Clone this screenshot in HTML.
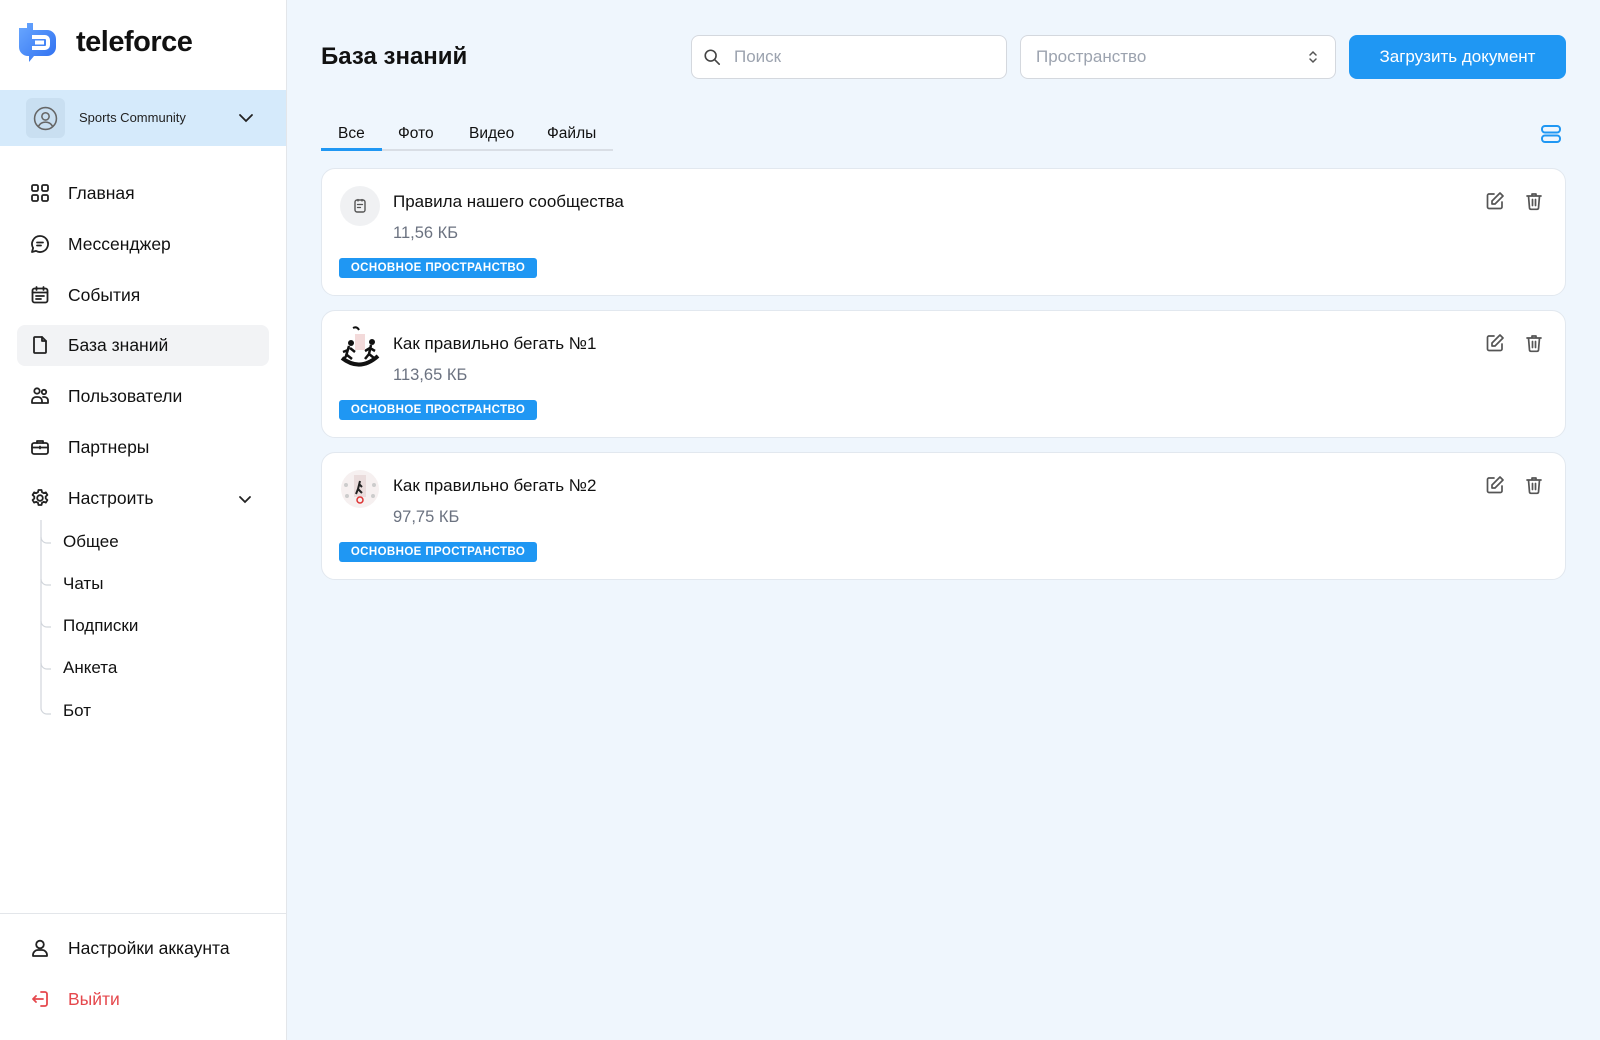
<!DOCTYPE html>
<html><head><meta charset="utf-8"><style>
*{margin:0;padding:0;box-sizing:border-box}
body{width:1600px;height:1040px;overflow:hidden;background:#eff6fd;font-family:"Liberation Sans",sans-serif;color:#111827;position:relative}
.abs{position:absolute}
.sb{position:absolute;left:0;top:0;width:287px;height:1040px;background:#fff;border-right:1px solid #e3e6ea}
.nav{position:absolute;left:0;width:287px;height:40px;display:flex;align-items:center;font-size:17.5px;font-weight:500;color:#111}
.nav svg{position:absolute;left:30px;width:20px;height:20px;fill:none;stroke:#222;stroke-width:1.8;stroke-linecap:round;stroke-linejoin:round}
.nav span{position:absolute;left:68px}
.sub{position:absolute;left:63px;font-size:17px;color:#111;font-weight:500}
.card{position:absolute;left:321px;width:1245px;height:128px;background:#fff;border:1.5px solid #e2e8ef;border-radius:14px}
.card .t{position:absolute;left:71px;top:23px;font-size:17px;font-weight:500;color:#111}
.card .s{position:absolute;left:71px;top:55px;font-size:16.5px;color:#6b7280}
.card .b{position:absolute;left:17px;top:89px;width:198px;height:20px;background:#1f97f3;border-radius:3px;color:#fff;font-size:11.5px;font-weight:700;letter-spacing:.4px;text-align:center;line-height:20px}
.card .ic{position:absolute;left:18px;top:17px;width:40px;height:40px;border-radius:50%;background:#f0f1f3}
.card .ed{position:absolute;left:1163px;top:22px}
.card .tr{position:absolute;left:1202px;top:22px}
.ico{fill:none;stroke:#555;stroke-width:1.7;stroke-linecap:round;stroke-linejoin:round}
</style></head><body>
<div class="sb">
 <svg class="abs" style="left:17px;top:22px" width="42" height="42" viewBox="0 0 42 42"><defs><linearGradient id="g" x1="0" y1="0" x2="1" y2="1"><stop offset="0" stop-color="#6aa8ff"/><stop offset="1" stop-color="#2d6ef0"/></linearGradient></defs><path d="M2 6h8V1h6v7h14a9 9 0 0 1 9 9v8a9 9 0 0 1-9 9H17l-5 6v-6h-1a9 9 0 0 1-9-9z" fill="url(#g)"/><path d="M15 15h13a3 3 0 0 1 3 3v5a3 3 0 0 1-3 3H15M18 20.5h9" stroke="#fff" stroke-width="4" fill="none"/></svg>
 <div class="abs" style="left:76px;top:26px;font-size:29px;font-weight:700;letter-spacing:-0.5px;color:#111">teleforce</div>
 <div class="abs" style="left:0;top:90px;width:286px;height:56px;background:#d5eafb"></div>
 <div class="abs" style="left:26px;top:98px;width:39px;height:40px;border-radius:6px;background:#c9dff1"></div>
 <svg class="abs" style="left:33px;top:106px" width="25" height="25" viewBox="0 0 24 24"><g class="ico" style="stroke:#666;stroke-width:1.5"><circle cx="12" cy="12" r="10.5"/><circle cx="12" cy="10" r="3.5"/><path d="M5.5 19c1.5-2.5 4-3.5 6.5-3.5s5 1 6.5 3.5"/></g></svg>
 <div class="abs" style="left:79px;top:110px;font-size:13px;font-weight:500;color:#222">Sports Community</div>
 <svg class="abs" style="left:238px;top:110px" width="16" height="16" viewBox="0 0 16 16"><path d="M2 5l6 6 6-6" fill="none" stroke="#222" stroke-width="1.8" stroke-linecap="round"/></svg>

 <div class="abs" style="left:17px;top:325px;width:252px;height:41px;background:#f2f3f5;border-radius:8px"></div>
 <div class="nav" style="top:173px"><svg viewBox="0 0 20 20"><rect x="2" y="2" width="6" height="6" rx="1.5"/><rect x="12" y="2" width="6" height="6" rx="1.5"/><rect x="2" y="12" width="6" height="6" rx="1.5"/><rect x="12" y="12" width="6" height="6" rx="1.5"/></svg><span>Главная</span></div>
 <div class="nav" style="top:224px"><svg viewBox="0 0 20 20"><path d="M10 2a8 8 0 1 1-4 14.9L2 18l1.1-4A8 8 0 0 1 10 2z"/><path d="M7 8.5h6M7 11.5h4"/></svg><span>Мессенджер</span></div>
 <div class="nav" style="top:275px"><svg viewBox="0 0 20 20"><rect x="2.5" y="3.5" width="15" height="14" rx="2"/><path d="M2.5 7.5h15M6.5 2v3M13.5 2v3M6 11h8M6 14h5"/></svg><span>События</span></div>
 <div class="nav" style="top:325px"><svg viewBox="0 0 20 20"><path d="M4 3a1 1 0 0 1 1-1h7l4 4v11a1 1 0 0 1-1 1H5a1 1 0 0 1-1-1z"/><path d="M12 2v4h4"/></svg><span>База знаний</span></div>
 <div class="nav" style="top:376px"><svg viewBox="0 0 20 20"><circle cx="7" cy="5" r="2.7"/><circle cx="14" cy="6" r="2.2"/><path d="M2 17v-2a4 4 0 0 1 4-4h2a4 4 0 0 1 4 4v2zM13 11h1.5a3.5 3.5 0 0 1 3.5 3.5V17h-5"/></svg><span>Пользователи</span></div>
 <div class="nav" style="top:427px"><svg viewBox="0 0 20 20"><rect x="2" y="6" width="16" height="11" rx="2"/><path d="M7 6V4h6v2M2 10.5h16M10 9.5v2"/></svg><span>Партнеры</span></div>
 <div class="nav" style="top:478px"><svg viewBox="0 0 20 20"><circle cx="10" cy="10" r="2.8"/><path d="M8.5 2h3l.5 2.2 1.8 1 2.1-.8 1.5 2.6-1.7 1.5v2l1.7 1.5-1.5 2.6-2.1-.8-1.8 1-.5 2.2h-3l-.5-2.2-1.8-1-2.1.8-1.5-2.6 1.7-1.5v-2L2.6 7l1.5-2.6 2.1.8 1.8-1z"/></svg><span>Настроить</span></div>
 <svg class="abs" style="left:237px;top:491px" width="16" height="16" viewBox="0 0 16 16"><path d="M3 6l5 5 5-5" fill="none" stroke="#222" stroke-width="1.8" stroke-linecap="round"/></svg>
 <svg class="abs" style="left:38px;top:520px" width="20" height="200"><path d="M3 0v188a6 6 0 0 0 6 6h4" fill="none" stroke="#d1d5db" stroke-width="1.2"/><path d="M3 17a6 6 0 0 0 6 6h4M3 59a6 6 0 0 0 6 6h4M3 101a6 6 0 0 0 6 6h4M3 143a6 6 0 0 0 6 6h4" fill="none" stroke="#d1d5db" stroke-width="1.2"/></svg>
 <div class="sub" style="top:532px">Общее</div>
 <div class="sub" style="top:574px">Чаты</div>
 <div class="sub" style="top:616px">Подписки</div>
 <div class="sub" style="top:658px">Анкета</div>
 <div class="sub" style="top:701px">Бот</div>
 <div class="abs" style="left:0;top:913px;width:287px;height:1px;background:#e3e6ea"></div>
 <div class="nav" style="top:928px"><svg viewBox="0 0 20 20"><circle cx="10" cy="6.5" r="3.8"/><path d="M3 18v-1a5 5 0 0 1 5-5h4a5 5 0 0 1 5 5v1z"/></svg><span>Настройки аккаунта</span></div>
 <div class="nav" style="top:979px;color:#e5484d"><svg viewBox="0 0 20 20" style="stroke:#e5484d"><path d="M11 3h4a2 2 0 0 1 2 2v10a2 2 0 0 1-2 2h-4M3 10h10M6 7l-3 3 3 3"/></svg><span>Выйти</span></div>
</div>

<div class="abs" style="left:321px;top:43px;font-size:24px;font-weight:600;color:#111">База знаний</div>
<div class="abs" style="left:691px;top:35px;width:316px;height:44px;background:#fff;border:1.5px solid #d4d8de;border-radius:8px"></div>
<svg class="abs" style="left:703px;top:48px" width="18" height="18" viewBox="0 0 20 20"><circle cx="8.5" cy="8.5" r="6" fill="none" stroke="#444" stroke-width="1.8"/><path d="M13 13l5 5" stroke="#444" stroke-width="1.8" stroke-linecap="round"/></svg>
<div class="abs" style="left:734px;top:47px;font-size:17px;color:#9ca3af">Поиск</div>
<div class="abs" style="left:1020px;top:35px;width:316px;height:44px;background:#fff;border:1.5px solid #d4d8de;border-radius:8px"></div>
<div class="abs" style="left:1036px;top:47px;font-size:17px;color:#9ca3af">Пространство</div>
<svg class="abs" style="left:1307px;top:48px" width="12" height="18" viewBox="0 0 12 18"><path d="M3 7l3-3 3 3M3 11l3 3 3-3" fill="none" stroke="#555" stroke-width="1.5" stroke-linecap="round"/></svg>
<div class="abs" style="left:1349px;top:35px;width:217px;height:44px;background:#1f97f3;border-radius:8px;color:#fff;font-size:17px;font-weight:500;text-align:center;line-height:44px">Загрузить документ</div>

<div class="abs" style="left:321px;top:149px;width:292px;height:2px;background:#d9dee5"></div>
<div class="abs" style="left:321px;top:148px;width:61px;height:3px;background:#1f97f3"></div>
<div class="abs" style="left:338px;top:125px;font-size:15.5px;color:#111">Все</div>
<div class="abs" style="left:398px;top:125px;font-size:15.5px;color:#111">Фото</div>
<div class="abs" style="left:469px;top:125px;font-size:15.5px;color:#111">Видео</div>
<div class="abs" style="left:547px;top:125px;font-size:15.5px;color:#111">Файлы</div>
<svg class="abs" style="left:1540px;top:124px" width="22" height="20" viewBox="0 0 22 20"><rect x="2" y="2" width="18" height="6.5" rx="3" fill="none" stroke="#1f97f3" stroke-width="2"/><rect x="2" y="11.5" width="18" height="6.5" rx="3" fill="none" stroke="#1f97f3" stroke-width="2"/></svg>

<div class="card" style="top:168px">
 <div class="ic"></div>
 <svg class="abs" style="left:30px;top:29px" width="16" height="16" viewBox="0 0 16 16"><rect x="3" y="2" width="10" height="12" rx="2" fill="none" stroke="#555" stroke-width="1.4"/><path d="M5.5 6.5h5M5.5 9.5h3M6 1.5v1.5M10 1.5v1.5" stroke="#555" stroke-width="1.3" stroke-linecap="round"/></svg>
 <div class="t">Правила нашего сообщества</div><div class="s">11,56 КБ</div><div class="b">ОСНОВНОЕ ПРОСТРАНСТВО</div>
 <svg class="ed" width="20" height="20" viewBox="0 0 20 20"><g class="ico"><path d="M9 3H4a1.5 1.5 0 0 0-1.5 1.5v11.5A1.5 1.5 0 0 0 4 17.5h11.5A1.5 1.5 0 0 0 17 16v-5"/><path d="M15 2l3 3-8 8H7v-3z"/></g></svg>
 <svg class="tr" width="20" height="20" viewBox="0 0 20 20"><g class="ico"><path d="M3 5h14M8 5V3h4v2M4.5 5l1 12a1.5 1.5 0 0 0 1.5 1.3h6a1.5 1.5 0 0 0 1.5-1.3l1-12M8.5 8.5v6M11.5 8.5v6"/></g></svg>
</div>
<div class="card" style="top:310px">
 <svg class="abs" style="left:18px;top:15px" width="40" height="42" viewBox="0 0 40 42"><path d="M2 32q18 14 36-2" stroke="#111" stroke-width="4" fill="none"/><circle cx="11" cy="17" r="3" fill="#111"/><path d="M9 20l-3 10M10 22l5 4M8 24l-5 2M7 29l-4 5M7 29l5 4" stroke="#111" stroke-width="2.5"/><circle cx="32" cy="16" r="3" fill="#111"/><path d="M31 19l-2 9M30 22l5 3M30 22l-5 3M29 28l-4 5M29 28l5 4" stroke="#111" stroke-width="2.5"/><rect x="15" y="8" width="10" height="16" fill="#f3dada"/><path d="M13 2q4-2 6 2" stroke="#111" stroke-width="2" fill="none"/></svg>
 <div class="t">Как правильно бегать №1</div><div class="s">113,65 КБ</div><div class="b">ОСНОВНОЕ ПРОСТРАНСТВО</div>
 <svg class="ed" width="20" height="20" viewBox="0 0 20 20"><g class="ico"><path d="M9 3H4a1.5 1.5 0 0 0-1.5 1.5v11.5A1.5 1.5 0 0 0 4 17.5h11.5A1.5 1.5 0 0 0 17 16v-5"/><path d="M15 2l3 3-8 8H7v-3z"/></g></svg>
 <svg class="tr" width="20" height="20" viewBox="0 0 20 20"><g class="ico"><path d="M3 5h14M8 5V3h4v2M4.5 5l1 12a1.5 1.5 0 0 0 1.5 1.3h6a1.5 1.5 0 0 0 1.5-1.3l1-12M8.5 8.5v6M11.5 8.5v6"/></g></svg>
</div>
<div class="card" style="top:452px">
 <svg class="abs" style="left:18px;top:16px" width="40" height="40" viewBox="0 0 40 40"><circle cx="20" cy="20" r="19" fill="#f6f0f0"/><rect x="14" y="6" width="12" height="22" fill="#eadcdc"/><path d="M20 12l-2 8M19 15l3 3M18 20l-2 5M18 20l4 4" stroke="#222" stroke-width="2"/><circle cx="20" cy="31" r="3" fill="none" stroke="#d33" stroke-width="1.5"/><circle cx="6" cy="16" r="2" fill="#ccc"/><circle cx="34" cy="16" r="2" fill="#ccc"/><circle cx="7" cy="27" r="2" fill="#ccc"/><circle cx="33" cy="27" r="2" fill="#ccc"/></svg>
 <div class="t">Как правильно бегать №2</div><div class="s">97,75 КБ</div><div class="b">ОСНОВНОЕ ПРОСТРАНСТВО</div>
 <svg class="ed" width="20" height="20" viewBox="0 0 20 20"><g class="ico"><path d="M9 3H4a1.5 1.5 0 0 0-1.5 1.5v11.5A1.5 1.5 0 0 0 4 17.5h11.5A1.5 1.5 0 0 0 17 16v-5"/><path d="M15 2l3 3-8 8H7v-3z"/></g></svg>
 <svg class="tr" width="20" height="20" viewBox="0 0 20 20"><g class="ico"><path d="M3 5h14M8 5V3h4v2M4.5 5l1 12a1.5 1.5 0 0 0 1.5 1.3h6a1.5 1.5 0 0 0 1.5-1.3l1-12M8.5 8.5v6M11.5 8.5v6"/></g></svg>
</div>
</body></html>
